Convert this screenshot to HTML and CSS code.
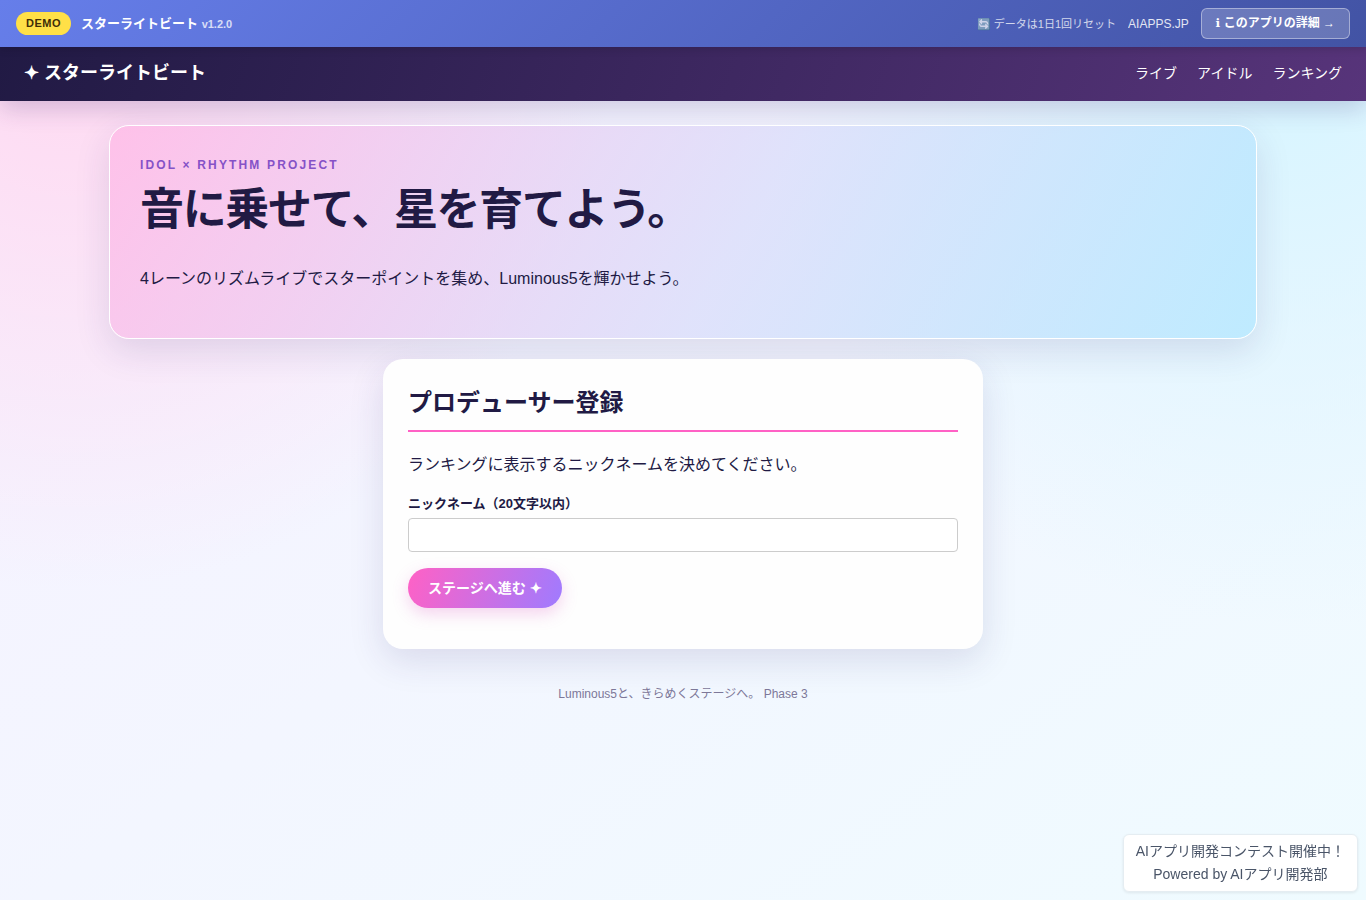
FILE: index.html
```html
<!DOCTYPE html>
<html lang="ja">
<head>
  <meta charset="UTF-8" />
  <meta name="viewport" content="width=device-width, initial-scale=1" />
  <title>スターライトビート</title>
  <link rel="stylesheet" href="styles.css">
</head>
<body>

  <!-- DEMO BAR -->
  <div class="demo-bar">
    <div class="demo-left">
      <span class="demo-badge">DEMO</span>
      <strong class="demo-name">スターライトビート <small>v1.2.0</small></strong>
    </div>
    <div class="demo-right">
      <span class="demo-reset">🔄 データは1日1回リセット</span>
      <a href="#" class="demo-site">AIAPPS.JP</a>
      <a href="#" class="demo-detail"><span class="info">ℹ</span> このアプリの詳細 →</a>
    </div>
  </div>

  <!-- HEADER -->
  <header class="site-header">
    <a href="#" class="brand">✦ スターライトビート</a>
    <nav class="site-nav">
      <a href="#">ライブ</a>
      <a href="#">アイドル</a>
      <a href="#">ランキング</a>
    </nav>
  </header>

  <main class="wrap">
    <section class="hero">
      <p class="eyebrow">IDOL × RHYTHM PROJECT</p>
      <h1>音に乗せて、星を育てよう。</h1>
      <p class="lead">4レーンのリズムライブでスターポイントを集め、Luminous5を輝かせよう。</p>
    </section>

    <!-- REGISTER -->
    <section class="card">
      <h2>プロデューサー登録</h2>
      <p>ランキングに表示するニックネームを決めてください。</p>
      <form>
        <label for="nickname">ニックネーム（20文字以内）</label>
        <input type="text" id="nickname" name="nickname" maxlength="20" />
        <button type="submit" class="btn">ステージへ進む ✦</button>
      </form>
    </section>
  </main>

  <footer class="site-footer">Luminous5と、きらめくステージへ。 Phase 3</footer>

  <a href="#" class="contest">AIアプリ開発コンテスト開催中！<br>Powered by AIアプリ開発部</a>

</body>
</html>
```

FILE: styles.css
```css
* {
  box-sizing: border-box;
}

body {
  margin: 0;
  min-height: 100vh;
  font-family: "Liberation Sans", "Noto Sans CJK JP", sans-serif;
  font-size: 16px;
  line-height: 26px;
  color: #211a44;
  background:
    radial-gradient(circle at 5% 5%, #ffd9f1, transparent 35%),
    radial-gradient(circle at 95% 10%, #d8f5ff, transparent 35%),
    linear-gradient(145deg, #f7f1ff, #effbff);
}

a {
  color: inherit;
  text-decoration: none;
}

/* Demo bar */
.demo-bar {
  position: relative;
  z-index: 2;
  display: flex;
  justify-content: space-between;
  align-items: center;
  padding: 8px 16px;
  color: #fff;
  background: linear-gradient(135deg, #667eea, #4253a4);
  box-shadow: 0 2px 8px rgba(0,0,0,0.15);
}

.demo-left {
  display: flex;
  align-items: center;
  gap: 10px;
}

.demo-badge {
  padding: 4px 10px;
  border-radius: 12px;
  background: #ffe047;
  color: #402d08;
  font-size: 11px;
  line-height: 15px;
  font-weight: 700;
  letter-spacing: 0.5px;
}

.demo-name {
  font-size: 13px;
}

.demo-name small {
  font-size: 11px;
  opacity: 0.75;
}

.demo-right {
  display: flex;
  align-items: center;
  gap: 12px;
  font-size: 12px;
}

.demo-reset {
  font-size: 11px;
  opacity: 0.75;
}

.demo-site {
  opacity: 0.85;
}

.demo-detail {
  padding: 6px 14px;
  border: 1px solid rgba(255,255,255,0.4);
  border-radius: 6px;
  background: rgba(255,255,255,0.2);
  line-height: 17px;
  font-weight: 700;
}

.info {
  font-family: "DejaVu Sans", sans-serif;
}

/* Header */
.site-header {
  display: flex;
  justify-content: space-between;
  align-items: center;
  padding: 11px 24px 13px;
  color: #fff;
  background: linear-gradient(110deg, #211a44, #57347a);
  box-shadow: 0 8px 24px rgba(50,35,110,0.2);
}

.brand {
  font-size: 18px;
  line-height: 30px;
  font-weight: 700;
}

.site-nav {
  display: flex;
  gap: 20px;
  font-size: 14px;
}

/* Main */
.wrap {
  max-width: 1180px;
  margin: 0 auto;
  padding: 24px 16px 0;
}

.hero {
  margin-bottom: 20px;
  padding: 30px;
  border: 1px solid #fff;
  border-radius: 20px;
  background: linear-gradient(120deg, rgba(255,184,230,0.75), rgba(217,220,250,0.75) 55%, rgba(184,233,255,0.85));
  box-shadow: 0 12px 35px rgba(50,35,110,0.13);
}

.eyebrow {
  margin: 0 0 8px;
  color: #8552c7;
  font-size: 12px;
  line-height: 18px;
  font-weight: 700;
  letter-spacing: 0.18em;
}

h1 {
  margin: 0 0 28px;
  font-size: 44px;
  line-height: 56px;
  letter-spacing: -0.03em;
}

.lead {
  margin: 0 0 16px;
}

.card {
  max-width: 600px;
  margin: 0 auto;
  padding: 25px 25px 41px;
  border-radius: 20px;
  background: #fefefe;
  box-shadow: 0 12px 35px rgba(50,35,110,0.13);
}

h2 {
  margin: 0 0 20px;
  padding-bottom: 8px;
  border-bottom: 2px solid #ff61c5;
  font-size: 24px;
  line-height: 38px;
}

.card p {
  margin: 0 0 16px;
}

label {
  display: block;
  margin-bottom: 4px;
  font-size: 13px;
  line-height: 20px;
  font-weight: 700;
}

input {
  display: block;
  width: 100%;
  height: 34px;
  margin-bottom: 16px;
  padding: 8px;
  border: 1px solid #ccc;
  border-radius: 4px;
  background: #fff;
  font: inherit;
}

.btn {
  display: block;
  padding: 10px 20px;
  border: 0;
  border-radius: 20px;
  background: linear-gradient(110deg, #ff61c5, #9f7bff);
  box-shadow: 0 6px 16px rgba(221,85,190,0.25);
  color: #fff;
  font-family: inherit;
  font-size: 14px;
  line-height: 20px;
  font-weight: 700;
  cursor: pointer;
}

/* Footer */
.site-footer {
  padding: 32px 16px;
  color: #7d7899;
  font-size: 12px;
  text-align: center;
}

.contest {
  position: fixed;
  right: 8px;
  bottom: 8px;
  padding: 5px 12px;
  border: 1px solid #e5edf2;
  border-radius: 6px;
  background: #fff;
  box-shadow: 0 1px 3px rgba(0,0,0,0.08);
  color: #4a5568;
  font-size: 14px;
  line-height: 23px;
  text-align: center;
}
```
